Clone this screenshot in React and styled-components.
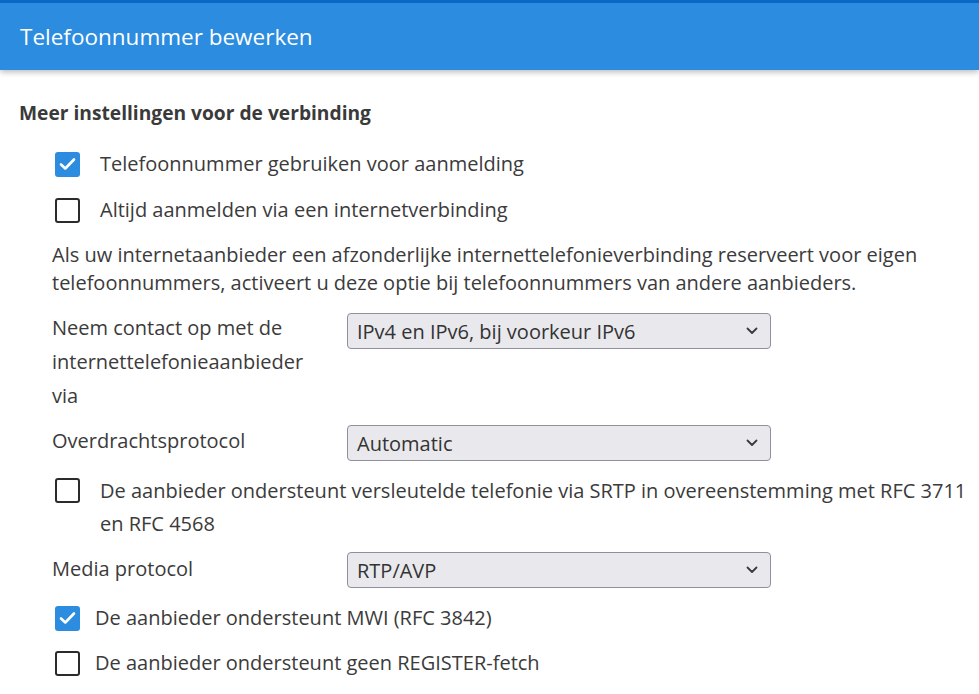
import React from "react";
import styled, { createGlobalStyle } from "styled-components";

const Global = createGlobalStyle`
  html, body { margin: 0; padding: 0; background: #ffffff; }
  body { font-family: "Open Sans", "Liberation Sans", sans-serif; color: #3b3b3b; }
  * { box-sizing: border-box; }
`;

const Page = styled.div`
  width: 979px;
  min-height: 694px;
  overflow: hidden;
`;

const Header = styled.header`
  height: 70px;
  border-top: 3px solid #0b67c4;
  background: #2b8ce0;
  box-shadow: 0 2px 6px rgba(0, 0, 0, 0.28);
  display: flex;
  align-items: center;
  padding: 0 0 0 20px;
  color: #ffffff;
  font-size: 22.5px;
  position: relative;
  z-index: 1;
`;

const Content = styled.main`
  display: flex;
  flex-direction: column;
  padding: 0 0 0 19px;
`;

const SectionTitle = styled.h2`
  margin: 29px 0 0 0;
  font-size: 19.2px;
  font-weight: 700;
  line-height: 28px;
  color: #3a3a3a;
`;

const CheckRow = styled.label`
  display: flex;
  align-items: ${(p) => (p.$top ? "flex-start" : "center")};
  gap: ${(p) => p.$gap || 20}px;
  margin: ${(p) => p.$mt}px 0 0 36px;
  font-size: 20px;
  line-height: ${(p) => p.$lh || 28}px;
`;

const Box = styled.span`
  flex: 0 0 auto;
  width: 25px;
  height: 25px;
  border-radius: 3px;
  display: flex;
  align-items: center;
  justify-content: center;
  margin-top: ${(p) => p.$offset || 0}px;
  background: ${(p) => (p.$checked ? "#2b8ce0" : "#ffffff")};
  border: ${(p) => (p.$checked ? "none" : "2.5px solid #2b2b2b")};
`;

const Paragraph = styled.p`
  margin: 17px 0 0 33px;
  font-size: 20px;
  line-height: 28px;
`;

const FieldRow = styled.div`
  display: flex;
  align-items: flex-start;
  margin: ${(p) => p.$mt}px 0 0 33px;
`;

const FieldLabel = styled.div`
  width: 295px;
  flex: 0 0 auto;
  font-size: 20px;
  line-height: 34px;
`;

const Select = styled.div`
  margin-top: ${(p) => p.$offset || 0}px;
  width: 424px;
  height: 36px;
  border: 1.5px solid #8f8f9d;
  border-radius: 4px;
  background: #e9e9ed;
  display: flex;
  align-items: center;
  justify-content: space-between;
  padding: 0 12px 0 9px;
  font-size: 20px;
  color: #333333;
`;

const Check = () => (
  <svg width="17" height="14" viewBox="0 0 17 14" fill="none">
    <path d="M2 7.5 L6.3 11.5 L15 2.5" stroke="#ffffff" strokeWidth="2.6" strokeLinecap="round" strokeLinejoin="round" />
  </svg>
);

const Chevron = () => (
  <svg width="12" height="8" viewBox="0 0 12 8" fill="none">
    <path d="M1.5 1.5 L6 6 L10.5 1.5" stroke="#3a3a3a" strokeWidth="1.8" strokeLinecap="round" strokeLinejoin="round" />
  </svg>
);

const Checkbox = ({ checked, offset }) => (
  <Box $checked={checked} $offset={offset}>{checked && <Check />}</Box>
);

export default function App() {
  return (
    <Page>
      <Global />
      <Header>Telefoonnummer bewerken</Header>
      <Content>
        <SectionTitle>Meer instellingen voor de verbinding</SectionTitle>
        <CheckRow $mt={23}>
          <Checkbox checked />
          <span>Telefoonnummer gebruiken voor aanmelding</span>
        </CheckRow>
        <CheckRow $mt={18}>
          <Checkbox />
          <span>Altijd aanmelden via een internetverbinding</span>
        </CheckRow>
        <Paragraph>
          Als uw internetaanbieder een afzonderlijke internettelefonieverbinding reserveert voor eigen
          <br />
          telefoonnummers, activeert u deze optie bij telefoonnummers van andere aanbieders.
        </Paragraph>
        <FieldRow $mt={14}>
          <FieldLabel>
            Neem contact op met de
            <br />
            internettelefonieaanbieder
            <br />
            via
          </FieldLabel>
          <Select $offset={2}>
            <span>IPv4 en IPv6, bij voorkeur IPv6</span>
            <Chevron />
          </Select>
        </FieldRow>
        <FieldRow $mt={11}>
          <FieldLabel>Overdrachtsprotocol</FieldLabel>
          <Select $offset={1}>
            <span>Automatic</span>
            <Chevron />
          </Select>
        </FieldRow>
        <CheckRow $mt={13} $top $lh={33}>
          <Checkbox offset={4} />
          <span>
            De aanbieder ondersteunt versleutelde telefonie via SRTP in overeenstemming met RFC 3711
            <br />
            en RFC 4568
          </span>
        </CheckRow>
        <FieldRow $mt={12}>
          <FieldLabel>Media protocol</FieldLabel>
          <Select $offset={0}>
            <span>RTP/AVP</span>
            <Chevron />
          </Select>
        </FieldRow>
        <CheckRow $mt={16} $gap={15}>
          <Checkbox checked />
          <span>De aanbieder ondersteunt MWI (RFC 3842)</span>
        </CheckRow>
        <CheckRow $mt={17} $gap={15}>
          <Checkbox />
          <span>De aanbieder ondersteunt geen REGISTER-fetch</span>
        </CheckRow>
      </Content>
    </Page>
  );
}
